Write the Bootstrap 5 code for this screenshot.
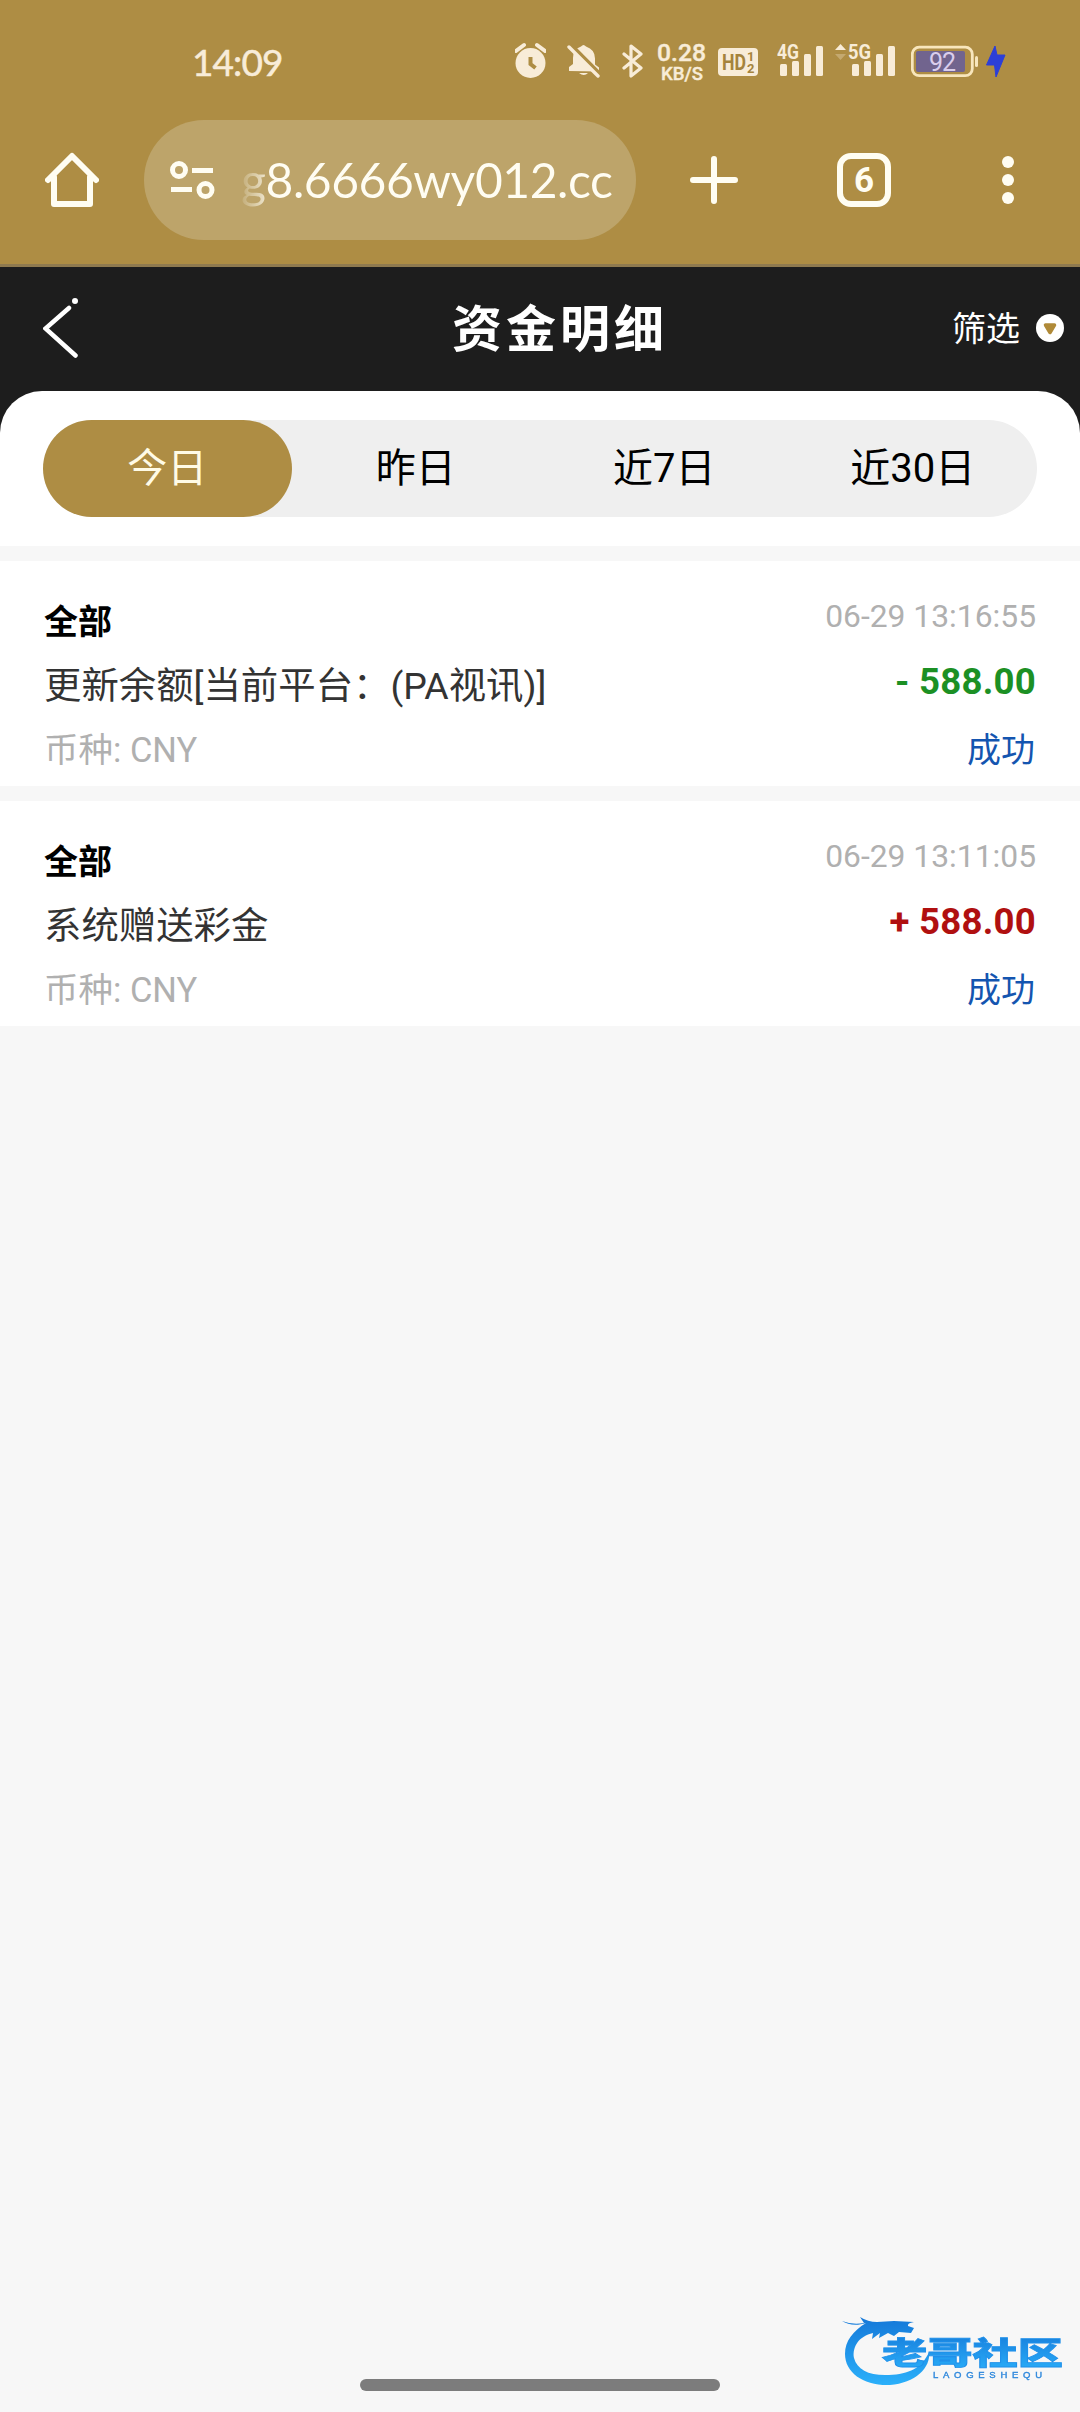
<!DOCTYPE html>
<html lang="zh-CN">
<head>
<meta charset="utf-8">
<meta name="viewport" content="width=device-width, initial-scale=1">
<title>资金明细</title>
<link href="https://cdn.jsdelivr.net/npm/bootstrap@5.3.0/dist/css/bootstrap.min.css" rel="stylesheet">
<style>
:root{--gold:#ae8d44;--cream:#f8ecd8}
body{font-family:Roboto,"Noto Sans CJK SC",sans-serif;background:#f7f7f7;min-height:2412px;line-height:1}
svg{display:block;flex:none}
.phone-top{background:var(--gold);height:267px;border-bottom:3px solid #8f7a4f}
.status-bar{height:120px;padding-top:2px;color:var(--cream)}
.status-bar svg{height:60px}
.clock{font:400 37px/1 Lato,sans-serif;margin-left:192px;width:323px;letter-spacing:-.9px;-webkit-text-stroke:.5px currentColor}
.g7{margin-left:7px}.g11{margin-left:11px}.g12{margin-left:12px}.g15{margin-left:15px}.g19{margin-left:19px}.g21{margin-left:21px}.g22{margin-left:22px}
.toolbar{height:120px;margin-top:0;color:#fffdf2}
.toolbar .home{margin-left:45px}
.toolbar .plus{margin-left:54px}
.toolbar .tabcount{margin-left:99px}
.toolbar .dots{margin-left:111px}
.url-pill{width:492px;height:120px;border-radius:60px;background:#bda46a;margin-left:45px;padding-left:26px}
.url-text{font:400 48px/60px Lato,sans-serif;letter-spacing:-.45px;margin-left:26px;white-space:nowrap;
 background:linear-gradient(90deg,rgba(255,253,242,.1) 0,rgba(255,253,242,.7) 24px,#fffdf2 27px);-webkit-background-clip:text;background-clip:text;color:transparent}
.app-head{background:#1d1d1d;height:124px;color:#fff}
.app-head .back{width:320px;padding-left:43px}
.app-head h1{font-size:50px;letter-spacing:4px;line-height:60px;font-weight:700;padding-top:2px}
.app-head .filter{width:280px;padding-right:15px;font-size:34px;line-height:44px}
.app-head .filter svg{margin-left:15px}
.sheet-back{background:#1d1d1d}
.sheet{background:#fff;border-radius:42px 42px 0 0;height:155px;padding:29px 43px}
.range-tabs{background:#efefef;border-radius:49px;height:97px}
.range-tabs .nav-link{height:97px;border-radius:49px;font-size:40px;line-height:97px;padding:0;color:#000}
.range-tabs .nav-link.active{background:var(--gold);color:#fffbe6}
.records{padding-top:15px;gap:15px}
.record{background:#fff;height:225px;padding:36px 44px 0}
.record .l1{height:50px}.record .l2{height:64px}.record .l3{height:60px}
.kind{font-size:34px;line-height:50px;font-weight:700;color:#000}
.when{font-size:31.8px;line-height:38px;color:#b0b0b0}
.what{font-size:37.4px;line-height:79px;color:#333}
.amount{font-size:36.600px;line-height:70px;font-weight:700;letter-spacing:.25px}
.out{color:#1c9024}.in{color:#b01010}
.cur{font-size:34.500px;line-height:78px;color:#b0b0b0}
.done{font-size:34px;line-height:78px;color:#1455b0;padding-right:1px}
.gesture{left:360px;bottom:21px;width:360px;height:12px;border-radius:6px;background:#7c7c7c}
.brand{left:840px;bottom:22px}
</style>
</head>
<body>
<header class="phone-top">
 <div class="status-bar d-flex align-items-center">
  <div class="clock">14:09</div>
  <svg width="31" viewBox="515 31 31 60" fill="currentColor"><circle cx="530.5" cy="63" r="15"/><path d="M516 51l8-6M545 51l-8-6" stroke="currentColor" stroke-width="4" stroke-linecap="round"/><path d="M530.5 57v7l5 4" fill="none" stroke="#ae8d44" stroke-width="4"/></svg>
  <svg class="g21" width="33" viewBox="567 31 33 60" fill="currentColor"><path d="M569 71v-4l4-3V58q0-9 8-11.500q2.500-3 5 0q9 3 9 12v6l4 3v4z"/><path d="M579 73h9q-4 4-9 0z"/><path d="M570 44l33 33" stroke="#ae8d44" stroke-width="4"/><path d="M569 47l29 29" stroke="currentColor" stroke-width="3.400" stroke-linecap="round"/></svg>
  <svg class="g22" width="22" viewBox="622 31 22 60" fill="none" stroke="currentColor" stroke-width="3.200" stroke-linejoin="round" stroke-linecap="round"><path d="M624 54l17 14-10 8V46l10 8-17 14"/></svg>
  <svg class="g12" width="51" viewBox="656 31 51 60" fill="currentColor" stroke="currentColor" stroke-width=".4" font-family="Roboto" font-weight="500"><text x="657" y="61" font-size="24" textLength="49" lengthAdjust="spacingAndGlyphs">0.28</text><text x="661" y="79.500" font-size="18" textLength="42" lengthAdjust="spacingAndGlyphs">KB/S</text></svg>
  <svg class="g11" width="40" viewBox="718 31 40 60"><rect x="718" y="48" width="40" height="28" rx="4" fill="#f8ecd8"/><g fill="#a5833c" font-family="Roboto" font-weight="700"><text x="722" y="70" font-size="22" textLength="24" lengthAdjust="spacingAndGlyphs">HD</text><text x="747" y="61" font-size="13">1</text><text x="747" y="73" font-size="13">2</text></g></svg>
  <svg class="g19" width="47" viewBox="777 31 47 60" fill="currentColor"><text x="777" y="59" font-family="Roboto" font-weight="700" font-size="20" textLength="22" lengthAdjust="spacingAndGlyphs">4G</text><rect x="780" y="64" width="7" height="12" rx="1.500"/><rect x="792" y="61" width="7" height="15" rx="1.500"/><rect x="804" y="54" width="7" height="22" rx="1.500"/><rect x="816" y="46" width="7" height="30" rx="1.500"/></svg>
  <svg class="g11" width="61" viewBox="835 31 61 60" fill="currentColor"><path d="M835 50l5.500-6 5.500 6z"/><path d="M835 54l5.500 6 5.500-6z" opacity=".3"/><text x="848" y="59" font-family="Roboto" font-weight="700" font-size="20" textLength="23" lengthAdjust="spacingAndGlyphs">5G</text><rect x="852" y="64" width="7" height="12" rx="1.500"/><rect x="864" y="61" width="7" height="15" rx="1.500"/><rect x="876" y="54" width="7" height="22" rx="1.500"/><rect x="888" y="46" width="7" height="30" rx="1.500"/></svg>
  <svg class="g15" width="68" viewBox="911 31 68 60"><rect x="912.300" y="47.200" width="60" height="28.500" rx="7" fill="none" stroke="#f8e6bc" stroke-width="2.800"/><rect x="916" y="51" width="49" height="21" rx="2" fill="#71648e"/><rect x="975" y="56" width="3" height="11" rx="1.500" fill="#f8e6bc"/><text x="929" y="70.500" font-family="Roboto" font-size="25" fill="#d9cdec" textLength="27">92</text></svg>
  <svg class="g7" width="20" viewBox="986 31 20 60"><path d="M995 46l-8.500 19h8l1.500 12 9-22h-8z" fill="#2c3fd8" stroke="#2c3fd8" stroke-linejoin="round"/></svg>
 </div>
 <div class="toolbar d-flex align-items-center">
  <svg class="home" width="54" height="56" viewBox="45 152 54 56" fill="none" stroke="currentColor" stroke-width="6" stroke-linejoin="round" stroke-linecap="round"><path d="M48 180l24-24 24 24M54 177v27h36v-27"/></svg>
  <div class="url-pill d-flex align-items-center">
   <svg width="45" height="40" viewBox="170 160 45 40" fill="none" stroke="currentColor" stroke-width="5"><circle cx="179" cy="170" r="6.500"/><circle cx="205.500" cy="190" r="6.500"/><path d="M192 170.500h21M171 189.500h21"/></svg>
   <div class="url-text">g8.6666wy012.cc</div>
  </div>
  <svg class="plus" width="48" height="50" viewBox="690 155 48 50" stroke="currentColor" stroke-width="6" stroke-linecap="round"><path d="M714 159v42M693 180h42"/></svg>
  <svg class="tabcount" width="54" height="56" viewBox="837 152 54 56"><rect x="840" y="156" width="48" height="48" rx="11" fill="none" stroke="currentColor" stroke-width="6"/><text x="864" y="192" text-anchor="middle" font-family="Roboto" font-weight="700" font-size="35" fill="currentColor">6</text></svg>
  <svg class="dots" width="12" height="50" viewBox="1002 155 12 50" fill="currentColor"><circle cx="1008" cy="162" r="6"/><circle cx="1008" cy="180" r="6"/><circle cx="1008" cy="198" r="6"/></svg>
 </div>
</header>

<nav class="app-head d-flex align-items-center justify-content-between">
 <div class="back"><svg width="36" height="64" viewBox="43 297 36 64" fill="none" stroke="#fff" stroke-width="4.500" stroke-linecap="round"><path d="M69 308L45.500 328.500l30 27" stroke-linejoin="miter"/><circle cx="75" cy="301" r="3" fill="#fff" stroke="none"/></svg></div>
 <h1 class="m-0">资金明细</h1>
 <div class="filter d-flex align-items-center justify-content-end">筛选<svg width="30" height="30" viewBox="0 0 30 30"><circle cx="15" cy="14" r="14" fill="#fff"/><path d="M10.500 11h9l-4.500 7.500z" fill="#b08a38" stroke="#b08a38" stroke-width="3.500" stroke-linejoin="round"/></svg></div>
</nav>

<div class="sheet-back"><div class="sheet">
 <ul class="nav nav-pills nav-fill nav-justified range-tabs">
  <li class="nav-item"><a class="nav-link active">今日</a></li>
  <li class="nav-item"><a class="nav-link">昨日</a></li>
  <li class="nav-item"><a class="nav-link">近7日</a></li>
  <li class="nav-item"><a class="nav-link">近30日</a></li>
 </ul>
</div></div>

<main class="records d-flex flex-column">
 <article class="record">
  <div class="l1 d-flex justify-content-between"><span class="kind">全部</span><span class="when">06-29 13:16:55</span></div>
  <div class="l2 d-flex justify-content-between"><span class="what">更新余额[当前平台：(PA视讯)]</span><span class="amount out">- 588.00</span></div>
  <div class="l3 d-flex justify-content-between"><span class="cur">币种: CNY</span><span class="done">成功</span></div>
 </article>
 <article class="record">
  <div class="l1 d-flex justify-content-between"><span class="kind">全部</span><span class="when">06-29 13:11:05</span></div>
  <div class="l2 d-flex justify-content-between"><span class="what">系统赠送彩金</span><span class="amount in">+ 588.00</span></div>
  <div class="l3 d-flex justify-content-between"><span class="cur">币种: CNY</span><span class="done">成功</span></div>
 </article>
</main>

<svg class="brand position-fixed" width="230" height="75" viewBox="840 2315 230 75">
 <defs><linearGradient id="blue" x1="0" y1="0" x2="0" y2="1"><stop offset="0" stop-color="#1578d8"/><stop offset="1" stop-color="#2bb0fa"/></linearGradient></defs>
 <path fill="url(#blue)" d="M842 2321q10 4 22 2l-4-6q8 5 17 5l17-1 20 1q-7 1-6 4l6 2-3 5-12-1-5 4-6-3-9 5 1-5-8 6 1-6c-14 3-21 14-19 25 3 12 16 18 35 17 20-1 33-7 40-23 2 16-14 31-39 33-26 1-45-12-45-31 0-13 8-23 21-31-9 3-18 2-24-2z"/>
 <text x="882" y="2364" font-family="Noto Sans CJK SC" font-weight="900" font-size="31" fill="url(#blue)" stroke="#2090ea" stroke-width=".8" textLength="181" lengthAdjust="spacingAndGlyphs">老哥社区</text>
 <text x="933" y="2378" font-family="Liberation Sans" font-size="9.500" fill="#2f88dc" stroke="#2f88dc" stroke-width=".4" textLength="109">LAOGESHEQU</text>
</svg>
<div class="gesture position-fixed"></div>
<script src="https://cdn.jsdelivr.net/npm/bootstrap@5.3.0/dist/js/bootstrap.bundle.min.js"></script>
</body>
</html>
